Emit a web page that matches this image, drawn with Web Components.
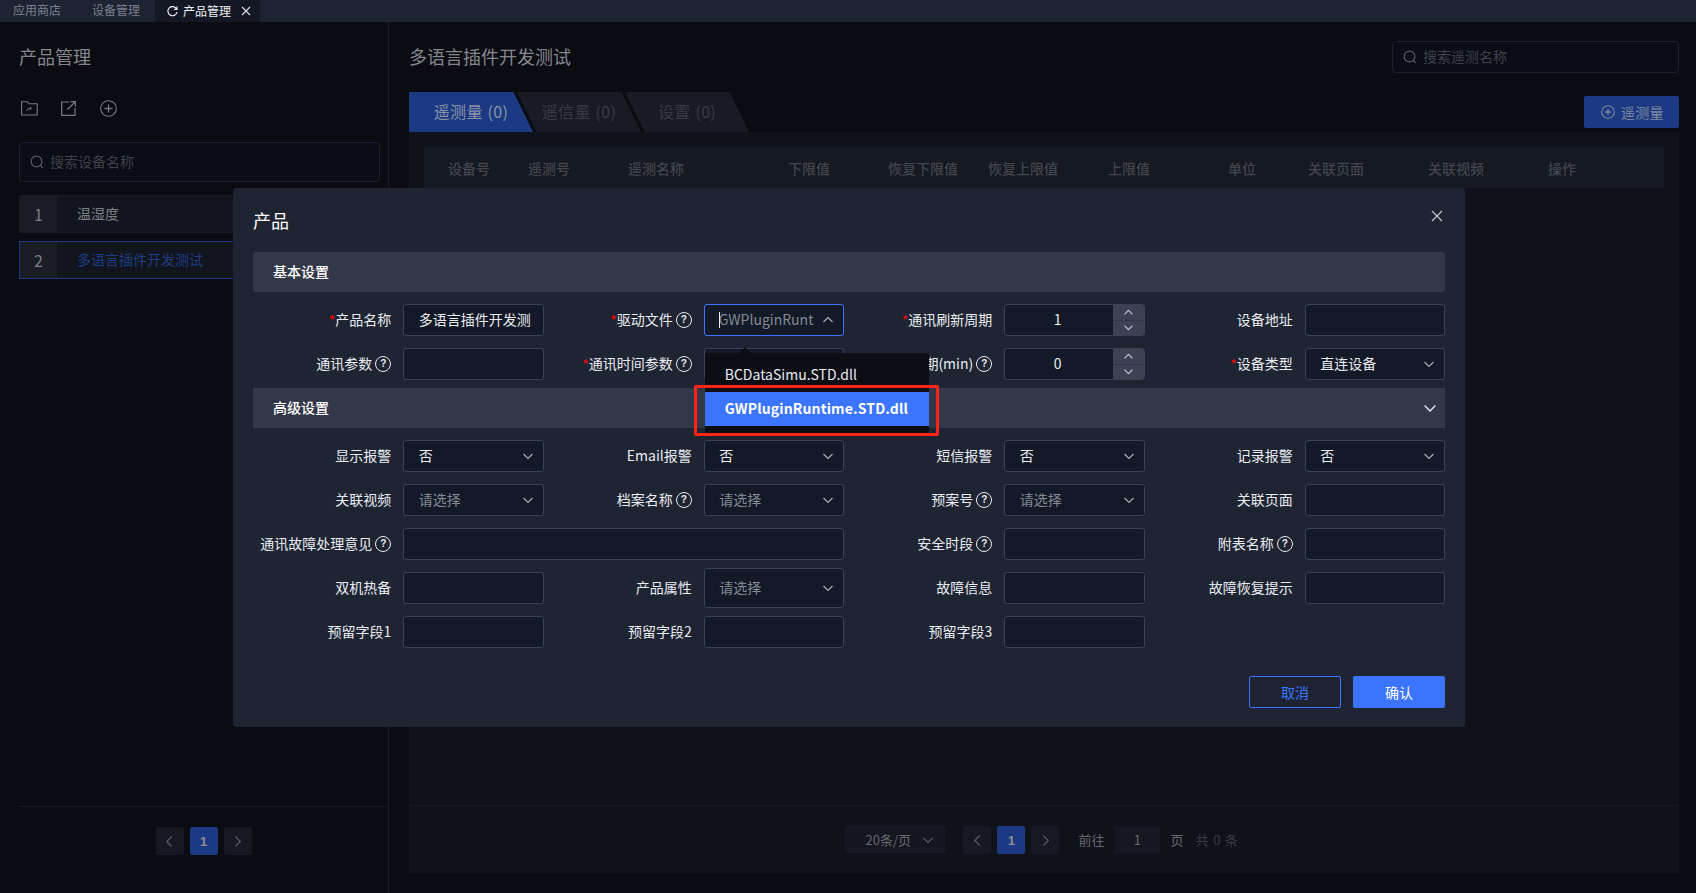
<!DOCTYPE html>
<html lang="zh">
<head>
<meta charset="utf-8">
<title>产品管理</title>
<style>
  html, body { margin: 0; padding: 0; height: 100%; background: #0a0c12; overflow: hidden; }
  body { font-family: "Noto Sans CJK SC", "Noto Sans", sans-serif; font-size: 14px; }
</style>
</head>
<body>
<app-shell></app-shell>

<script>
const chevron = (dir, color, w = 10) => `
  <svg width="${w}" height="${w}" viewBox="0 0 10 10" fill="none" stroke="${color}" stroke-width="1.2">
    <path d="${dir === 'up' ? 'M0.5 7 L5 2.5 L9.5 7' : dir === 'down' ? 'M0.5 3 L5 7.5 L9.5 3' : dir === 'left' ? 'M7 0.5 L2.5 5 L7 9.5' : 'M3 0.5 L7.5 5 L3 9.5'}"/>
  </svg>`;

class TopTabs extends HTMLElement {
  connectedCallback() {
    this.attachShadow({ mode: 'open' });
    this.shadowRoot.innerHTML = `
      <style>
        :host { display: flex; height: 22px; background: #1e2332; font-size: 12px; line-height: 20px; color: #7c818d; }
        .tab { padding: 0 15px; }
        .tab.first { padding: 0 16px 0 13px; }
        .active { display: flex; align-items: center; width: 105px; box-sizing: border-box; padding: 0 0 0 12px; background: #141824; color: #eef0f4; }
        .ic { margin-right: 5px; }
        .x { margin-left: 10px; }
      </style>
      <div class="tab first">应用商店</div>
      <div class="tab">设备管理</div>
      <div class="active">
        <svg class="ic" width="11" height="11" viewBox="0 0 11 11" fill="none" stroke="#eef0f4" stroke-width="1.2"><path d="M9.6 3 A4.6 4.6 0 1 0 10 6.2"/><path d="M10 0.6 V3.4 H7.2"/></svg>
        <span>产品管理</span>
        <svg class="x" width="10" height="10" viewBox="0 0 10 10" stroke="#dfe2e8" stroke-width="1.1"><path d="M1 1 L9 9 M9 1 L1 9"/></svg>
      </div>
    `;
  }
}

class SearchBox extends HTMLElement {
  connectedCallback() {
    this.attachShadow({ mode: 'open' });
    this.shadowRoot.innerHTML = `
      <style>
        :host { display: flex; align-items: center; box-sizing: border-box; background: #0a0d15; border: 1px solid #1d2230; border-radius: 4px; padding-left: 10px; color: #3e4149; font-size: 14px; }
        svg { margin-right: 6px; flex: none; }
        span { padding-bottom: 2px; }
      </style>
      <svg width="14" height="14" viewBox="0 0 14 14" fill="none" stroke="#595c64" stroke-width="1.2"><circle cx="6.5" cy="6.5" r="5.4"/><path d="M10.4 10.4 L12.6 12.8"/></svg>
      <span>${this.getAttribute('placeholder')}</span>
    `;
  }
}

class PageNav extends HTMLElement {
  connectedCallback() {
    this.attachShadow({ mode: 'open' });
    this.shadowRoot.innerHTML = `
      <style>
        :host { display: flex; gap: 6px; }
        div { width: 28px; height: 28px; box-sizing: border-box; display: flex; align-items: center; justify-content: center; background: #161922; border-radius: 2px; font: bold 13px "Liberation Sans", sans-serif; }
        .on { background: #1c3a84; color: #8d8f96; }
      </style>
      <div>${chevron('left', '#55575e', 11)}</div>
      <div class="on">1</div>
      <div>${chevron('right', '#55575e', 11)}</div>
    `;
  }
}

class DevicePanel extends HTMLElement {
  connectedCallback() {
    this.attachShadow({ mode: 'open' });
    this.shadowRoot.innerHTML = `
      <style>
        :host { display: flex; flex-direction: column; flex: none; width: 389px; box-sizing: border-box; border-right: 1px solid #1a1d25; padding-left: 19px; }
        h1 { margin: 21px 0 1px; font-size: 18px; font-weight: 400; line-height: 26px; color: #85878e; }
        .tools { display: flex; align-items: center; height: 16px; margin: 30px 0 26px 2px; }
        .tools svg { display: block; }
        search-box { width: 361px; height: 40px; }
        .list { display: flex; flex-direction: column; gap: 8px; width: 361px; margin-top: 13px; }
        .item { display: flex; align-items: center; height: 38px; box-sizing: border-box; background: #12151d; border: 1px solid #171a22; color: #7d8087; }
        .item b { width: 37px; align-self: stretch; background: #1a1d26; display: flex; align-items: center; justify-content: center; font-weight: 400; font-size: 16px; color: #7a7d84; }
        .item span { margin-left: 20px; padding-bottom: 2px; }
        .item.sel { border-color: #1c3a84; color: #1f3c84; }
        .foot { margin-top: auto; height: 87px; border-top: 1px solid #171a22; display: flex; justify-content: center; padding-top: 20px; box-sizing: border-box; }
      </style>
      <h1>产品管理</h1>
      <div class="tools">
        <svg width="17" height="15" viewBox="0 0 17 15" fill="none" stroke="#77797f" stroke-width="1.1"><path d="M0.6 0.8 H6.4 L8 2.8 H16.2 V14 H0.6 Z"/><path d="M5.5 10 C6 8 7.5 7.4 10 7.4 M8.6 6 L10.4 7.4 L8.6 8.8" stroke-width="1"/></svg>
        <svg style="margin-left:23px" width="15" height="15" viewBox="0 0 15 15" fill="none" stroke="#77797f" stroke-width="1.2"><path d="M8 1 H0.7 V14.3 H14 V7"/><path d="M6.5 8.5 L14 1 M9.5 0.7 H14.3 V5.5"/></svg>
        <svg style="margin-left:24px" width="17" height="17" viewBox="0 0 17 17" fill="none" stroke="#77797f" stroke-width="1.1"><circle cx="8.5" cy="8.5" r="7.8"/><path d="M8.5 4.5 V12.5 M4.5 8.5 H12.5" stroke-width="1.3"/></svg>
      </div>
      <search-box placeholder="搜索设备名称"></search-box>
      <div class="list">
        <div class="item"><b>1</b><span>温湿度</span></div>
        <div class="item sel"><b>2</b><span>多语言插件开发测试</span></div>
      </div>
      <div class="foot"><page-nav></page-nav></div>
    `;
  }
}

class TelemetryPanel extends HTMLElement {
  connectedCallback() {
    const cols = ['设备号', '遥测号', '遥测名称', '下限值', '恢复下限值', '恢复上限值', '上限值', '单位', '关联页面', '关联视频', '操作'];
    this.attachShadow({ mode: 'open' });
    this.shadowRoot.innerHTML = `
      <style>
        :host { display: flex; flex-direction: column; flex: 1; min-width: 0; padding: 19px 17px 20px 20px; box-sizing: border-box; }
        .head { display: flex; justify-content: space-between; align-items: center; height: 31px; }
        h2 { margin: 0 0 2px; font-size: 18px; font-weight: 400; line-height: 26px; color: #85878e; }
        search-box { width: 287px; height: 32px; }
        .bar { display: flex; justify-content: space-between; align-items: center; height: 40px; margin-top: 20px; }
        .tabs { display: flex; }
        .tabs div { width: 124px; height: 40px; line-height: 39px; text-align: center; font-size: 16px; letter-spacing: 0.3px; word-spacing: 1px; background: #191b24; color: #373a43; margin-left: -16px; clip-path: polygon(0 0, 104.5px 0, 100% 100%, 19.5px 100%); }
        .tabs div.on { margin-left: 0; background: #1c3a84; color: #8b93a8; clip-path: polygon(0 0, 104.5px 0, 100% 100%, 0 100%); }
        .add { display: flex; align-items: center; width: 95px; height: 32px; box-sizing: border-box; padding-left: 17px; background: #1c3a84; border-radius: 2px; color: #7f889f; }
        .add svg { margin-right: 5px; }
        .add span { padding: 0 0 1px 1px; letter-spacing: 0.3px; }
        .body { flex: 1; display: flex; flex-direction: column; background: #0f1219; }
        .cols { display: grid; grid-template-columns: 80px 100px 160px 100px 100px 120px 120px 80px 120px 120px 1fr; height: 41px; margin: 15px 15px 0; padding-left: 24px; align-items: center; background: #151922; color: #42454c; font-weight: 500; }
        .foot { margin-top: auto; height: 68px; box-sizing: border-box; border-top: 1px solid #171a22; display: flex; align-items: flex-start; justify-content: center; padding: 20px 4px 0 0; color: #66686e; font-size: 13px; line-height: 28px; }
        .size { display: flex; align-items: center; justify-content: space-between; width: 100px; height: 27px; box-sizing: border-box; padding: 0 11px 0 19px; background: #14171f; border: 1px solid #181b23; border-radius: 2px; margin-right: 18px; }
        .go { margin: 0 10px 0 19px; }
        .num { width: 46px; height: 28px; text-align: center; background: #151821; }
        .pg { margin-left: 10px; }
        .total { margin-left: 12px; color: #393b41; letter-spacing: 0.4px; word-spacing: 1px; }
      </style>
      <div class="head">
        <h2>多语言插件开发测试</h2>
        <search-box placeholder="搜索遥测名称"></search-box>
      </div>
      <div class="bar">
        <div class="tabs">
          <div class="on">遥测量 (0)</div>
          <div>遥信量 (0)</div>
          <div>设置 (0)</div>
        </div>
        <div class="add">
          <svg width="14" height="14" viewBox="0 0 14 14" fill="none" stroke="#7f889f" stroke-width="1.1"><circle cx="7" cy="7" r="6.3"/><path d="M7 4 V10 M4 7 H10" stroke-width="1.3"/></svg>
          <span>遥测量</span>
        </div>
      </div>
      <div class="body">
        <div class="cols">${cols.map(c => `<span>${c}</span>`).join('')}</div>
        <div class="foot">
          <div class="size"><span>20条/页</span>${chevron('down', '#55575e', 10)}</div>
          <page-nav></page-nav>
          <span class="go">前往</span>
          <div class="num">1</div>
          <span class="pg">页</span>
          <span class="total">共 0 条</span>
        </div>
      </div>
    `;
  }
}

class FormField extends HTMLElement {
  connectedCallback() {
    const type = this.getAttribute('type') || 'input';
    const value = this.getAttribute('value') || '';
    const hint = this.getAttribute('placeholder');
    let control = '';
    if (type === 'input') {
      control = `<div class="box"><span class="val">${value}</span></div>`;
    } else if (type === 'select') {
      control = `<div class="box select"><span class="${hint ? 'hint' : 'val'}">${hint || value}</span>${chevron('down', '#a9aeb9')}</div>`;
    } else if (type === 'number') {
      control = `<div class="box number"><span class="val">${value}</span>
        <div class="spin"><i>${chevron('up', '#c3c7d0', 9)}</i><i>${chevron('down', '#c3c7d0', 9)}</i></div></div>`;
    } else if (type === 'open') {
      control = `<div class="box select focus"><span class="hint">${value}</span>${chevron('up', '#a9aeb9')}<slot></slot></div>`;
    }
    this.attachShadow({ mode: 'open' });
    this.shadowRoot.innerHTML = `
      <style>
        :host { display: flex; align-items: center; height: 32px; color: #e9ecf2; }
        :host([wide]) { grid-column: span 2; }
        label { flex: 1; display: flex; justify-content: flex-end; align-items: center; margin-right: 12px; white-space: nowrap; line-height: 20px; }
        label .txt { padding-bottom: 2px; }
        .star { color: #f00; }
        .help { width: 14px; height: 14px; margin-left: 3px; border: 1.2px solid #e9ecf2; border-radius: 50%; display: flex; align-items: center; justify-content: center; font: bold 10px/1 "Liberation Sans", sans-serif; }
        .box { position: relative; width: 140.6px; height: 32px; box-sizing: border-box; display: flex; align-items: center; padding-left: 14.5px; background: #131926; border: 1px solid #394259; border-radius: 3px; }
        :host([wide]) .box { width: 441.1px; }
        :host([tall]) .box { height: 40px; }
        .val, .hint { padding-bottom: 2px; white-space: nowrap; }
        .select { justify-content: space-between; padding-right: 10px; }
        .hint { color: #858a96; }
        .focus { border-color: #3b74ff; padding-left: 14px; }
        .focus::before { content: ""; position: absolute; left: 14px; top: 7px; width: 1px; height: 16px; background: #e9ecf2; }
        .number { padding: 0; }
        .number .val { flex: 1; text-align: center; padding-right: 3px; }
        .spin { width: 31px; align-self: stretch; display: flex; flex-direction: column; background: #3c4254; border-radius: 0 2px 2px 0; }
        .spin i { flex: 1; display: flex; align-items: center; justify-content: center; }
        .spin i + i { border-top: 1px solid #30364a; }
      </style>
      <label>${this.hasAttribute('required') ? '<span class="star">*</span>' : ''}<span class="txt">${this.getAttribute('label')}</span>${this.hasAttribute('help') ? '<span class="help">?</span>' : ''}</label>
      ${control}
    `;
  }
}

class DriverMenu extends HTMLElement {
  connectedCallback() {
    this.attachShadow({ mode: 'open' });
    this.shadowRoot.innerHTML = `
      <style>
        :host { position: absolute; left: 0; top: 48px; z-index: 5; width: 224px; height: 80px; box-sizing: border-box; padding-top: 5px; background: #0d0e14; border-radius: 3px; color: #e9ecf2; }
        :host::before { content: ""; position: absolute; left: 34px; top: -6px; border: 6px solid transparent; border-top: 0; border-bottom-color: #0d0e14; }
        .opt { height: 34px; line-height: 33px; padding-left: 20px; }
        .sel { background: #3b74ff; color: #fff; font-weight: 700; letter-spacing: 0.14px; }
        .mark { position: absolute; left: -11px; top: 32px; width: 245px; height: 51px; box-sizing: border-box; border: 3px solid #ff2318; border-radius: 2px; }
      </style>
      <div class="opt">BCDataSimu.STD.dll</div>
      <div class="opt sel">GWPluginRuntime.STD.dll</div>
      <div class="mark"></div>
    `;
  }
}

class ProductDialog extends HTMLElement {
  connectedCallback() {
    this.attachShadow({ mode: 'open' });
    this.shadowRoot.innerHTML = `
      <style>
        :host { position: absolute; left: 233px; top: 188px; width: 1232px; box-sizing: border-box; padding: 20px 20px 19px; background: #1f2433; border-radius: 4px; color: #fff; }
        .title { display: flex; justify-content: space-between; align-items: center; height: 26px; margin-bottom: 18px; font-size: 18px; line-height: 26px; }
        .title span { padding-bottom: 2px; }
        .title svg { margin: -10px 2px 0 0; }
        .bar { display: flex; justify-content: space-between; align-items: center; height: 40px; padding: 0 9px 0 20px; background: #333848; border-radius: 3px; font-weight: 500; }
        .bar span { padding-bottom: 2px; }
        .grid { display: grid; grid-template-columns: repeat(4, 300.5px); row-gap: 12px; margin: 12px 0 0 -9.7px; }
        .bar.adv { margin-top: 8px; border-radius: 0; }
        .btns { display: flex; justify-content: flex-end; gap: 12px; margin-top: 28px; }
        .btns div { width: 92px; height: 32px; box-sizing: border-box; line-height: 30px; text-align: center; border: 1px solid #3b74ff; border-radius: 2px; color: #3b74ff; }
        .btns .ok { background: #3b74ff; color: #fff; }
      </style>
      <div class="title">
        <span>产品</span>
        <svg width="12" height="12" viewBox="0 0 12 12" stroke="#c9ccd3" stroke-width="1.1"><path d="M1 1 L11 11 M11 1 L1 11"/></svg>
      </div>
      <div class="bar"><span>基本设置</span></div>
      <div class="grid">
        <form-field label="产品名称" required value="多语言插件开发测"></form-field>
        <form-field label="驱动文件" required help type="open" value="GWPluginRunt"><driver-menu></driver-menu></form-field>
        <form-field label="通讯刷新周期" required type="number" value="1"></form-field>
        <form-field label="设备地址"></form-field>
        <form-field label="通讯参数" help></form-field>
        <form-field label="通讯时间参数" required help></form-field>
        <form-field label="通讯重连周期(min)" help type="number" value="0"></form-field>
        <form-field label="设备类型" required type="select" value="直连设备"></form-field>
      </div>
      <div class="bar adv"><span>高级设置</span>${chevron('down', '#e6e8ee', 12)}</div>
      <div class="grid">
        <form-field label="显示报警" type="select" value="否"></form-field>
        <form-field label="Email报警" type="select" value="否"></form-field>
        <form-field label="短信报警" type="select" value="否"></form-field>
        <form-field label="记录报警" type="select" value="否"></form-field>
        <form-field label="关联视频" type="select" placeholder="请选择"></form-field>
        <form-field label="档案名称" help type="select" placeholder="请选择"></form-field>
        <form-field label="预案号" help type="select" placeholder="请选择"></form-field>
        <form-field label="关联页面"></form-field>
        <form-field label="通讯故障处理意见" help wide></form-field>
        <form-field label="安全时段" help></form-field>
        <form-field label="附表名称" help></form-field>
        <form-field label="双机热备"></form-field>
        <form-field label="产品属性" tall type="select" placeholder="请选择"></form-field>
        <form-field label="故障信息"></form-field>
        <form-field label="故障恢复提示"></form-field>
        <form-field label="预留字段1"></form-field>
        <form-field label="预留字段2"></form-field>
        <form-field label="预留字段3"></form-field>
      </div>
      <div class="btns"><div>取消</div><div class="ok">确认</div></div>
    `;
  }
}

class AppShell extends HTMLElement {
  connectedCallback() {
    this.attachShadow({ mode: 'open' });
    this.shadowRoot.innerHTML = `
      <style>
        :host { display: block; position: relative; width: 1696px; height: 893px; background: #0a0c12; overflow: hidden; }
        .main { display: flex; height: 871px; }
      </style>
      <top-tabs></top-tabs>
      <div class="main">
        <device-panel></device-panel>
        <telemetry-panel></telemetry-panel>
      </div>
      <product-dialog></product-dialog>
    `;
  }
}

customElements.define('top-tabs', TopTabs);
customElements.define('search-box', SearchBox);
customElements.define('page-nav', PageNav);
customElements.define('device-panel', DevicePanel);
customElements.define('telemetry-panel', TelemetryPanel);
customElements.define('form-field', FormField);
customElements.define('driver-menu', DriverMenu);
customElements.define('product-dialog', ProductDialog);
customElements.define('app-shell', AppShell);
</script>
</body>
</html>
